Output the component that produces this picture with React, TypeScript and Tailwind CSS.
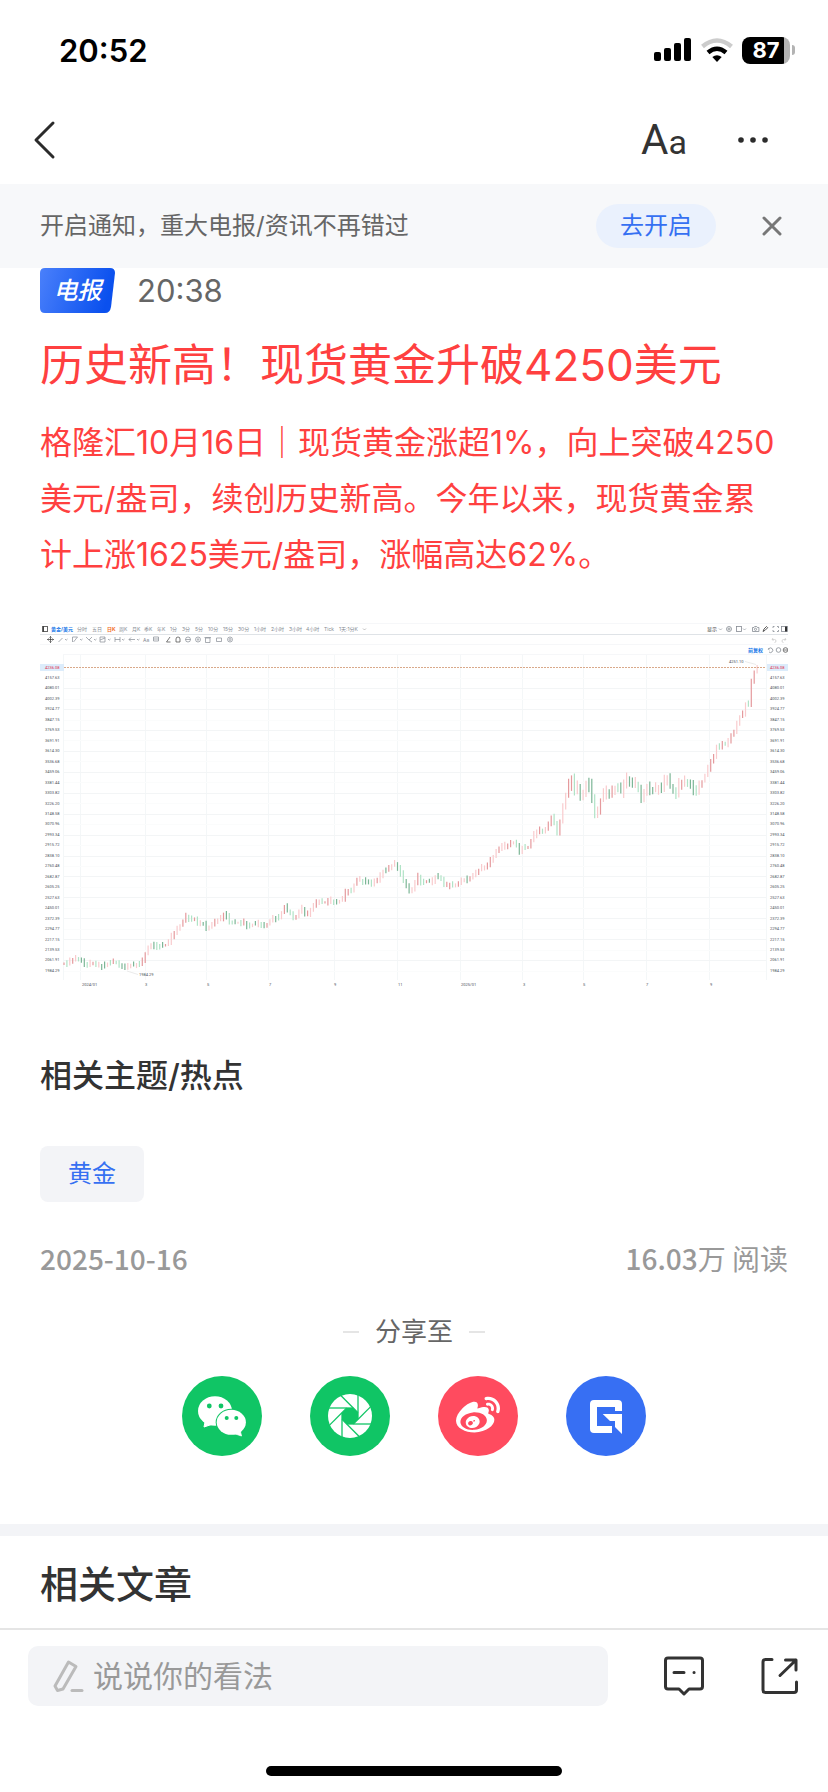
import React, { useState } from 'react';
import { FaWeibo } from 'react-icons/fa';

// [label, x] for the period switcher above the chart
const periods: [string, number][] = [
  ['分时', 37], ['五日', 52], ['日K', 67], ['周K', 79], ['月K', 92], ['季K', 104], ['年K', 117],
  ['1分', 130], ['3分', 142], ['5分', 155], ['10分', 168], ['15分', 183], ['30分', 198],
  ['1小时', 214], ['2小时', 231], ['3小时', 249], ['4小时', 266], ['Tick', 284], ['1天:1分K', 299],
];

const months: [string, number][] = [
  ['2024/01', 42], ['3', 105], ['5', 167], ['7', 229], ['9', 294], ['11', 358],
  ['2025/01', 421], ['3', 483], ['5', 543], ['7', 606], ['9', 670],
];

const gridX = [40, 105, 166, 228, 294, 357, 420, 482, 543, 606, 669];

// Trend of the price line: x, y
const trend: [number, number][] = [
  [24, 342], [30, 340], [37, 336], [43, 340], [48, 343], [53, 340], [59, 345], [65, 343], [73, 340], [80, 342],
  [87, 346], [93, 343], [103, 341], [107, 331], [112, 322], [118, 325], [123, 323], [128, 323], [133, 314],
  [140, 305], [145, 299], [148, 293], [151, 298], [155, 295], [160, 304], [164, 301], [168, 306], [177, 300],
  [182, 296], [186, 290], [190, 300], [198, 301], [205, 300], [207, 305], [213, 303], [218, 301], [225, 304],
  [230, 301], [235, 296], [240, 295], [246, 285], [250, 291], [256, 296], [263, 286], [267, 295], [273, 285],
  [280, 279], [285, 281], [290, 278], [296, 281], [303, 278], [308, 268], [312, 270], [315, 263], [319, 257],
  [323, 260], [328, 258], [333, 263], [340, 256], [344, 249], [350, 247], [356, 241], [360, 247], [363, 255],
  [367, 263], [371, 271], [375, 263], [380, 253], [382, 261], [387, 259], [393, 260], [398, 253], [402, 256],
  [406, 265], [412, 262], [418, 263], [423, 259], [430, 256], [438, 251], [443, 245], [448, 244], [453, 237],
  [457, 231], [462, 223], [467, 225], [472, 221], [476, 220], [480, 230], [484, 225], [490, 225], [495, 213],
  [500, 207], [505, 210], [510, 203], [513, 194], [516, 201], [519, 213], [522, 196], [525, 181], [528, 171],
  [531, 158], [532, 150], [535, 168], [539, 165], [543, 180], [548, 158], [551, 165], [555, 183], [557, 198],
  [562, 178], [565, 170], [572, 171], [577, 165], [582, 170], [587, 155], [592, 161], [597, 163], [603, 175],
  [607, 165], [612, 170], [618, 165], [623, 165], [628, 155], [632, 165], [636, 173], [640, 163], [646, 159],
  [652, 165], [658, 168], [663, 160], [668, 151], [671, 140], [675, 135], [677, 123], [681, 126], [686, 120],
  [688, 125], [691, 113], [695, 111], [698, 103], [701, 95], [703, 95], [707, 81], [708, 71], [710, 83],
  [713, 58], [717, 46],
];

const priceAt = (x: number) => {
  const i = Math.max(1, trend.findIndex((p) => p[0] >= x));
  const [x0, y0] = trend[i - 1];
  const [x1, y1] = trend[i];
  return y0 + ((y1 - y0) * (x - x0)) / (x1 - x0);
};

const candles = Array.from({ length: 240 }, (_, i) => {
  const x = 24 + i * 2.9;
  const volatile = x > 524 && x < 660;
  const open = priceAt(Math.max(24, x - 1.4));
  const close = priceAt(Math.min(717, x + 1.4));
  const high = (volatile ? 2 : 1) + ((i * 7) % 5) * (volatile ? 1.2 : 0.7);
  const low = (volatile ? 2 : 1) + ((i * 11) % 6) * (volatile ? 1 : 0.5);
  const up = close < open - 1.2 || (close - open <= 1.2 && (i * 13) % 5 < 2);
  const strong = (i * 5) % 7 < 3;
  return {
    x,
    top: Math.min(open, close) - high,
    bottom: Math.max(open, close) + low,
    color: up ? (strong ? '#e59a9d' : '#f9cbcd') : strong ? '#7cb696' : '#b0e3c6',
  };
});

const GoldChart = () => (
  <svg viewBox="0 0 748 370" className="block w-full" fontSize="5" fill="#858b93" role="img" aria-label="现货黄金日K走势图">
    {/* Toolbar */}
    <path d="M0 1.5H748M0 22.5H748M23 32.5H748" stroke="#f6f7f9" />
    <path d="M0 12.5H748" stroke="#dfe3e7" />
    <rect x="2.5" y="4.5" width="5" height="5" fill="none" stroke="#666" />
    <path d="M3.5 4V10" stroke="#444" />
    <text x="11" y="9" fill="#1677e8" fontWeight="bold">黄金/美元</text>
    {periods.map(([label, x]) => (
      <text key={label} x={x} y="9" fill={label === '日K' ? '#f26a1b' : '#858b93'} fontWeight={label === '日K' ? 'bold' : 'normal'}>
        {label}
      </text>
    ))}
    <path d="M323 6.5l1.5 1.5 1.5-1.5" fill="none" stroke="#999" strokeWidth=".6" />
    <g fill="none" stroke="#858b93" strokeWidth=".7">
      <path d="M7.5 17.5h6M10.5 14.5v6M8.5 16.5l-1 1 1 1M12.5 16.5l1 1-1 1M9.5 15.5l1-1 1 1M9.5 19.5l1 1 1-1" stroke="#333" />
      <path d="M18.5 20l4-4M32.5 20v-5h5l-4 5M46 15l3 3 3 2M49 18l3-3M60 15h5v5h-5zM60 18l5-2M75 15v5M75 17.5h5M80 15v5M89 17.5h6M91 15.5l-2 2 2 2" />
      <path d="M25 17l1.2 1.2L27.5 17M40 17l1.2 1.2L42.5 17M54 17l1.2 1.2L56.5 17M68 17l1.2 1.2L70.5 17M82 17l1.2 1.2L84.5 17M97 17l1.2 1.2L99.5 17" />
      <path d="M113.5 15h5v4h-5zM113.5 17h5M165.5 16h4.5v4.5h-4.5zM164.5 15.5h6.5M176.5 16h5v3.5h-5z" />
      <path d="M130 15l-3.5 5h4M136 20v-3a2 2 0 014 0v3z" stroke="#444" />
      <circle cx="148" cy="17.5" r="2.5" />
      <path d="M145.5 17.5h5" />
      <circle cx="158" cy="17.5" r="2.5" />
      <circle cx="158" cy="17.5" r=".8" />
      <circle cx="190" cy="17.5" r="2.5" />
      <circle cx="190" cy="17.5" r="1" />
    </g>
    <text x="103" y="20">Aa</text>
    <text x="667" y="9" fill="#444">显示</text>
    <g fill="none" stroke="#858b93" strokeWidth=".8">
      <path d="M679 6.5l1.5 1.5 1.5-1.5M703 6.5l1.5 1.5 1.5-1.5" strokeWidth=".6" />
      <circle cx="689" cy="7" r="2.5" />
      <circle cx="689" cy="7" r="1" />
      <rect x="696.5" y="4.5" width="5" height="5" />
      <path d="M712.5 5.5h1.5l.7-1h2l.7 1h1.5v4h-6.4z" />
      <circle cx="715.5" cy="7.3" r="1.1" />
      <path d="M723 9.5l1-2.5 2.5-2.5 1.2 1.2-2.5 2.5z" stroke="#333" />
      <path d="M733 6V4.5h1.5M737 4.5h1.5V6M738.5 8v1.5H737M734.5 9.5H733V8" />
      <rect x="741.5" y="4.5" width="6" height="5" />
      <path d="M746 4.5v5" stroke="#333" strokeWidth="2" />
      <path d="M733 16l-1 1.5 1.5 1M732 17.5h2.5a1.5 1.5 0 010 3M745 16l1 1.5-1.5 1M746 17.5h-2.5a1.5 1.5 0 000 3" stroke="#ccc" />
      <path d="M729 26l-.8 1.2 1.3.8M729 26.5a2.3 2.3 0 110 3.5" />
      <circle cx="738.5" cy="28" r="2.3" />
      <circle cx="745.5" cy="28" r="2.3" stroke="#555" />
      <path d="M744 28h3" stroke="#555" />
    </g>
    <text x="708" y="30" fill="#1677e8" fontWeight="bold">前复权</text>

    {/* Grid */}
    <g stroke="#f4f7f8">
      {gridX.map((x) => (
        <path key={x} d={`M${x + 0.5} 33V358`} />
      ))}
      <path d="M23.5 33V358M726.5 33V358" />
      {Array.from({ length: 29 }, (_, i) => (
        <path key={i} d={`M24 ${Math.round(55.7 + i * 10.46) + 0.5}H726`} stroke={i % 2 ? '#f3f5f6' : '#fbfcfc'} />
      ))}
    </g>

    {/* Price and time axes */}
    <rect x="0" y="42" width="24" height="7" fill="#dcecfb" />
    <rect x="727" y="42" width="21" height="7" fill="#dcecfb" />
    <g fontSize="4" fill="#4b525c" className="font-[Roboto,sans-serif]">
      <text x="5" y="47" fill="#e0314b">4236.08</text>
      <text x="730" y="47" fill="#e0314b">4236.08</text>
      {Array.from({ length: 29 }, (_, i) => {
        const value = (4157.63 - i * 77.6192).toFixed(2);
        const y = 57 + i * 10.46;
        return (
          <g key={value}>
            <text x="5" y={y}>{value}</text>
            <text x="730" y={y}>{value}</text>
          </g>
        );
      })}
      {months.map(([label, x]) => (
        <text key={x} x={x} y="364">{label}</text>
      ))}
      <text x="99" y="354">1984.29</text>
      <text x="689" y="41">4251.10</text>
    </g>

    {/* Candles */}
    {candles.map((c) => (
      <path key={c.x} d={`M${c.x} ${c.top}V${c.bottom}`} stroke={c.color} strokeWidth="1.2" />
    ))}
    <path d="M24 45.5H726" stroke="#d9a98a" strokeDasharray="2 1" />
    <path d="M87 349l11 3.5M705 39.5l11 3" stroke="#ddd" strokeWidth=".6" />
  </svg>
);

const StatusBar = () => (
  <div className="h-24 pt-1 flex items-center justify-between pl-[59px] pr-[33px] text-black">
    <span className="text-[31px] leading-none font-semibold">20:52</span>
    <div className="flex items-center gap-2">
      <svg width="38" height="24" viewBox="0 0 38 24">
        <rect x="0" y="14" width="7" height="9" rx="2" />
        <rect x="10" y="10" width="7" height="13" rx="2" />
        <rect x="20" y="5" width="7" height="18" rx="2" />
        <rect x="30" y="0" width="7" height="23" rx="2" />
      </svg>
      <svg width="34" height="25" viewBox="0 0 34 25" fill="none" strokeWidth="4.5">
        <path d="M2.5 8.5Q17-3.5 31.5 8.5" stroke="#ccc" />
        <path d="M8 14.5Q17 7 26 14.5" stroke="#000" />
        <path d="M12.3 19Q17 15.5 21.7 19L17 24z" fill="#000" />
      </svg>
      <div className="flex items-center gap-0.5">
        <div className="w-12 h-[27px] rounded-lg flex items-center justify-center bg-linear-to-r from-black from-[87%] to-[#b3b3b3] to-[87%] text-white text-[22px] leading-none font-bold">
          87
        </div>
        <div className="w-[3px] h-2.5 rounded-r-full bg-[#b3b3b3]" />
      </div>
    </div>
  </div>
);

const App = () => {
  const [showNotice, setShowNotice] = useState(true);
  const [comment, setComment] = useState('');

  return (
    <div className="min-h-screen flex flex-col bg-white text-[#333] font-[Inter,'Noto_Sans_CJK_SC',sans-serif]">
      <StatusBar />

      {/* Nav */}
      <header className="h-[88px] flex items-center justify-between pl-8 pr-[59px]">
        <button aria-label="返回">
          <svg width="26" height="40" viewBox="0 0 26 40" fill="none" stroke="#2b2b2b" strokeWidth="3" strokeLinecap="round" strokeLinejoin="round">
            <path d="M21 3L4 20l17 17" />
          </svg>
        </button>
        <div className="flex items-center gap-[50px]">
          <button aria-label="字号" className="flex items-baseline font-[Roboto,sans-serif]">
            <span className="text-[42px] leading-none">A</span>
            <span className="text-[34px] leading-none">a</span>
          </button>
          <button aria-label="更多">
            <svg width="32" height="8" viewBox="0 0 32 8" fill="#2b2b2b">
              <circle cx="4" cy="4" r="2.8" />
              <circle cx="16" cy="4" r="2.8" />
              <circle cx="28" cy="4" r="2.8" />
            </svg>
          </button>
        </div>
      </header>

      {/* Notification banner */}
      {showNotice && (
        <div className="h-[84px] flex items-center pl-10 pr-[46px] bg-[#f7f8fa] text-2xl">
          <p className="flex-1 text-[#666]">开启通知，重大电报/资讯不再错过</p>
          <button className="w-[120px] h-11 rounded-full bg-[#eaf1fd] text-[#3670f2]">去开启</button>
          <button className="ml-[46px]" aria-label="关闭" onClick={() => setShowNotice(false)}>
            <svg width="20" height="20" viewBox="0 0 20 20" stroke="#777" strokeWidth="3" strokeLinecap="round">
              <path d="M2 2l16 16M18 2L2 18" />
            </svg>
          </button>
        </div>
      )}

      {/* Article */}
      <article className="px-10">
        <div className="flex items-center gap-[22px]">
          <div className="relative w-[75px] h-[45px] flex items-center justify-center">
            <svg className="absolute inset-0" width="75" height="45" viewBox="0 0 75 45">
              <defs>
                <linearGradient id="badge" x1="0" x2="1" y1="0" y2=".2">
                  <stop offset="0" stopColor="#4a80fb" />
                  <stop offset="1" stopColor="#0a50ee" />
                </linearGradient>
              </defs>
              <path d="M5 0H70Q75 0 75 5L71 39Q70 45 65 45H5Q0 45 0 40V5Q0 0 5 0Z" fill="url(#badge)" />
            </svg>
            <span className="relative text-2xl leading-none font-medium italic text-white">电报</span>
          </div>
          <time className="text-[31px] leading-none text-[#666]">20:38</time>
        </div>
        <h1 className="mt-5 text-[44px] leading-[64px] text-[#ff4040]">历史新高！现货黄金升破4250美元</h1>
        <p className="mt-[18px] pr-3 text-[32px] leading-[56px] text-[#ff4040]">
          格隆汇10月16日｜现货黄金涨超1%，向上突破4250美元/盎司，续创历史新高。今年以来，现货黄金累计上涨1625美元/盎司，涨幅高达62%。
        </p>
        <div className="mt-[39px]">
          <GoldChart />
        </div>

        {/* Topics */}
        <h2 className="mt-[60px] text-[32px] leading-12 font-medium">相关主题/热点</h2>
        <a href="#" className="mt-[46px] w-[104px] h-14 flex items-center justify-center rounded-lg bg-[#f3f4f7] text-2xl text-[#3670f2]">
          黄金
        </a>
        <div className="mt-9 flex justify-between text-[28px] leading-10 text-[#999] font-['Noto_Sans_CJK_SC',sans-serif]">
          <time className="font-medium">2025-10-16</time>
          <span>
            <span className="font-medium">16.03</span>万 阅读
          </span>
        </div>

        {/* Share */}
        <div className="mt-[34px] flex items-center justify-center gap-4 text-[26px] leading-10 text-[#666]">
          <span className="w-4 h-0.5 bg-[#e5e5e5]" />
          分享至
          <span className="w-4 h-0.5 bg-[#e5e5e5]" />
        </div>
        <div className="mt-6 mb-[68px] flex justify-center gap-12">
          <button aria-label="微信" className="size-20 rounded-full bg-[#10c565]">
            <svg viewBox="-40 -40 80 80" fill="#fff">
              <path d="M-17 6L-18 11L-9 8Z" stroke="#fff" strokeLinejoin="round" />
              <ellipse cx="-7" cy="-5" rx="17" ry="14.8" />
              <ellipse cx="9.3" cy="6.3" rx="15.6" ry="13.5" fill="#10c565" />
              <ellipse cx="9.3" cy="6.3" rx="14.6" ry="12.5" />
              <path d="M12 17.5L19.5 20L18 14Z" stroke="#fff" strokeWidth=".8" strokeLinejoin="round" />
              <g fill="#10c565">
                <circle cx="-12.7" cy="-10" r="2.4" />
                <circle cx="-1" cy="-10" r="2.4" />
                <circle cx="4.7" cy="2" r="2" />
                <circle cx="14.3" cy="2" r="2" />
              </g>
            </svg>
          </button>
          <button aria-label="朋友圈" className="size-20 rounded-full bg-[#10c565]">
            <svg viewBox="-40 -40 80 80">
              <circle r="22" fill="#fff" />
              <path d="M-3.3-8H3.3L8-3.3V3.3L3.3 8H-3.3L-8 3.3V-3.3Z" fill="#10c565" />
              {[0, 45, 90, 135, 180, 225, 270, 315].map((angle) => (
                <path key={angle} d="M-22-8H3.3" stroke="#10c565" strokeWidth="1.3" transform={`rotate(${angle})`} />
              ))}
            </svg>
          </button>
          <button aria-label="微博" className="size-20 rounded-full bg-[#ff4b5f] text-white flex items-center justify-center">
            <FaWeibo size={44} />
          </button>
          <button aria-label="格隆汇" className="size-20 rounded-full bg-[#376ff3]">
            <svg viewBox="-40 -40 80 80" fill="#fff">
              <path d="M16-5V-12Q16-16 12-16H-12Q-16-16-16-12V13Q-16 17-12 17H6V10H-9V-9H9V-5Z" />
              <path d="M-3.3-2H16V18L9 11V5H4Z" />
            </svg>
          </button>
        </div>
      </article>

      {/* Related articles */}
      <section className="border-t-12 border-[#f3f4f7] px-10 pt-5 pb-4">
        <h2 className="text-[38px] leading-14 font-medium">相关文章</h2>
      </section>

      {/* Comment bar */}
      <footer className="border-t-2 border-[#e5e5e5] pt-4 pb-4">
        <div className="flex items-center pl-7 pr-[29px]">
          <label className="flex-1 h-15 flex items-center gap-[7px] pl-6 rounded-[10px] bg-[#f3f4f7]">
            <svg width="34" height="34" viewBox="0 0 34 34" fill="none" stroke="#bbb" strokeWidth="3" strokeLinecap="round" strokeLinejoin="round">
              <path d="M16.5 3L24 7.5L11 30L5.5 31.5L3 27Z" />
              <path d="M20 31.5H30" />
            </svg>
            <input
              type="text"
              aria-label="评论"
              className="flex-1 min-w-0 bg-transparent text-3xl leading-10 outline-none placeholder:text-[#999]"
              placeholder="说说你的看法"
              value={comment}
              onChange={(e) => setComment(e.target.value)}
            />
          </label>
          <button className="ml-14" aria-label="查看评论">
            <svg width="40" height="40" viewBox="0 0 40 40" fill="none" stroke="#333" strokeWidth="3" strokeLinecap="round" strokeLinejoin="round">
              <path d="M4 2H36Q38.5 2 38.5 4.5V30.5Q38.5 33 36 33H25L20 38L15 33H4Q1.5 33 1.5 30.5V4.5Q1.5 2 4 2Z" />
              <path d="M10 16.5H20M30 16.5h.1" />
            </svg>
          </button>
          <button className="ml-[57px]" aria-label="分享">
            <svg width="38" height="38" viewBox="0 0 38 38" fill="none" stroke="#333" strokeWidth="3" strokeLinecap="round" strokeLinejoin="round">
              <path d="M11 2.5H4.5Q2 2.5 2 5V33Q2 35.5 4.5 35.5H33Q35.5 35.5 35.5 33V25" />
              <path d="M24.5 3H35V13M35 3L19 18.5" />
            </svg>
          </button>
        </div>
        <div className="mt-[60px] mx-auto w-[296px] h-2.5 rounded-full bg-black" />
      </footer>
    </div>
  );
};

export default App;
